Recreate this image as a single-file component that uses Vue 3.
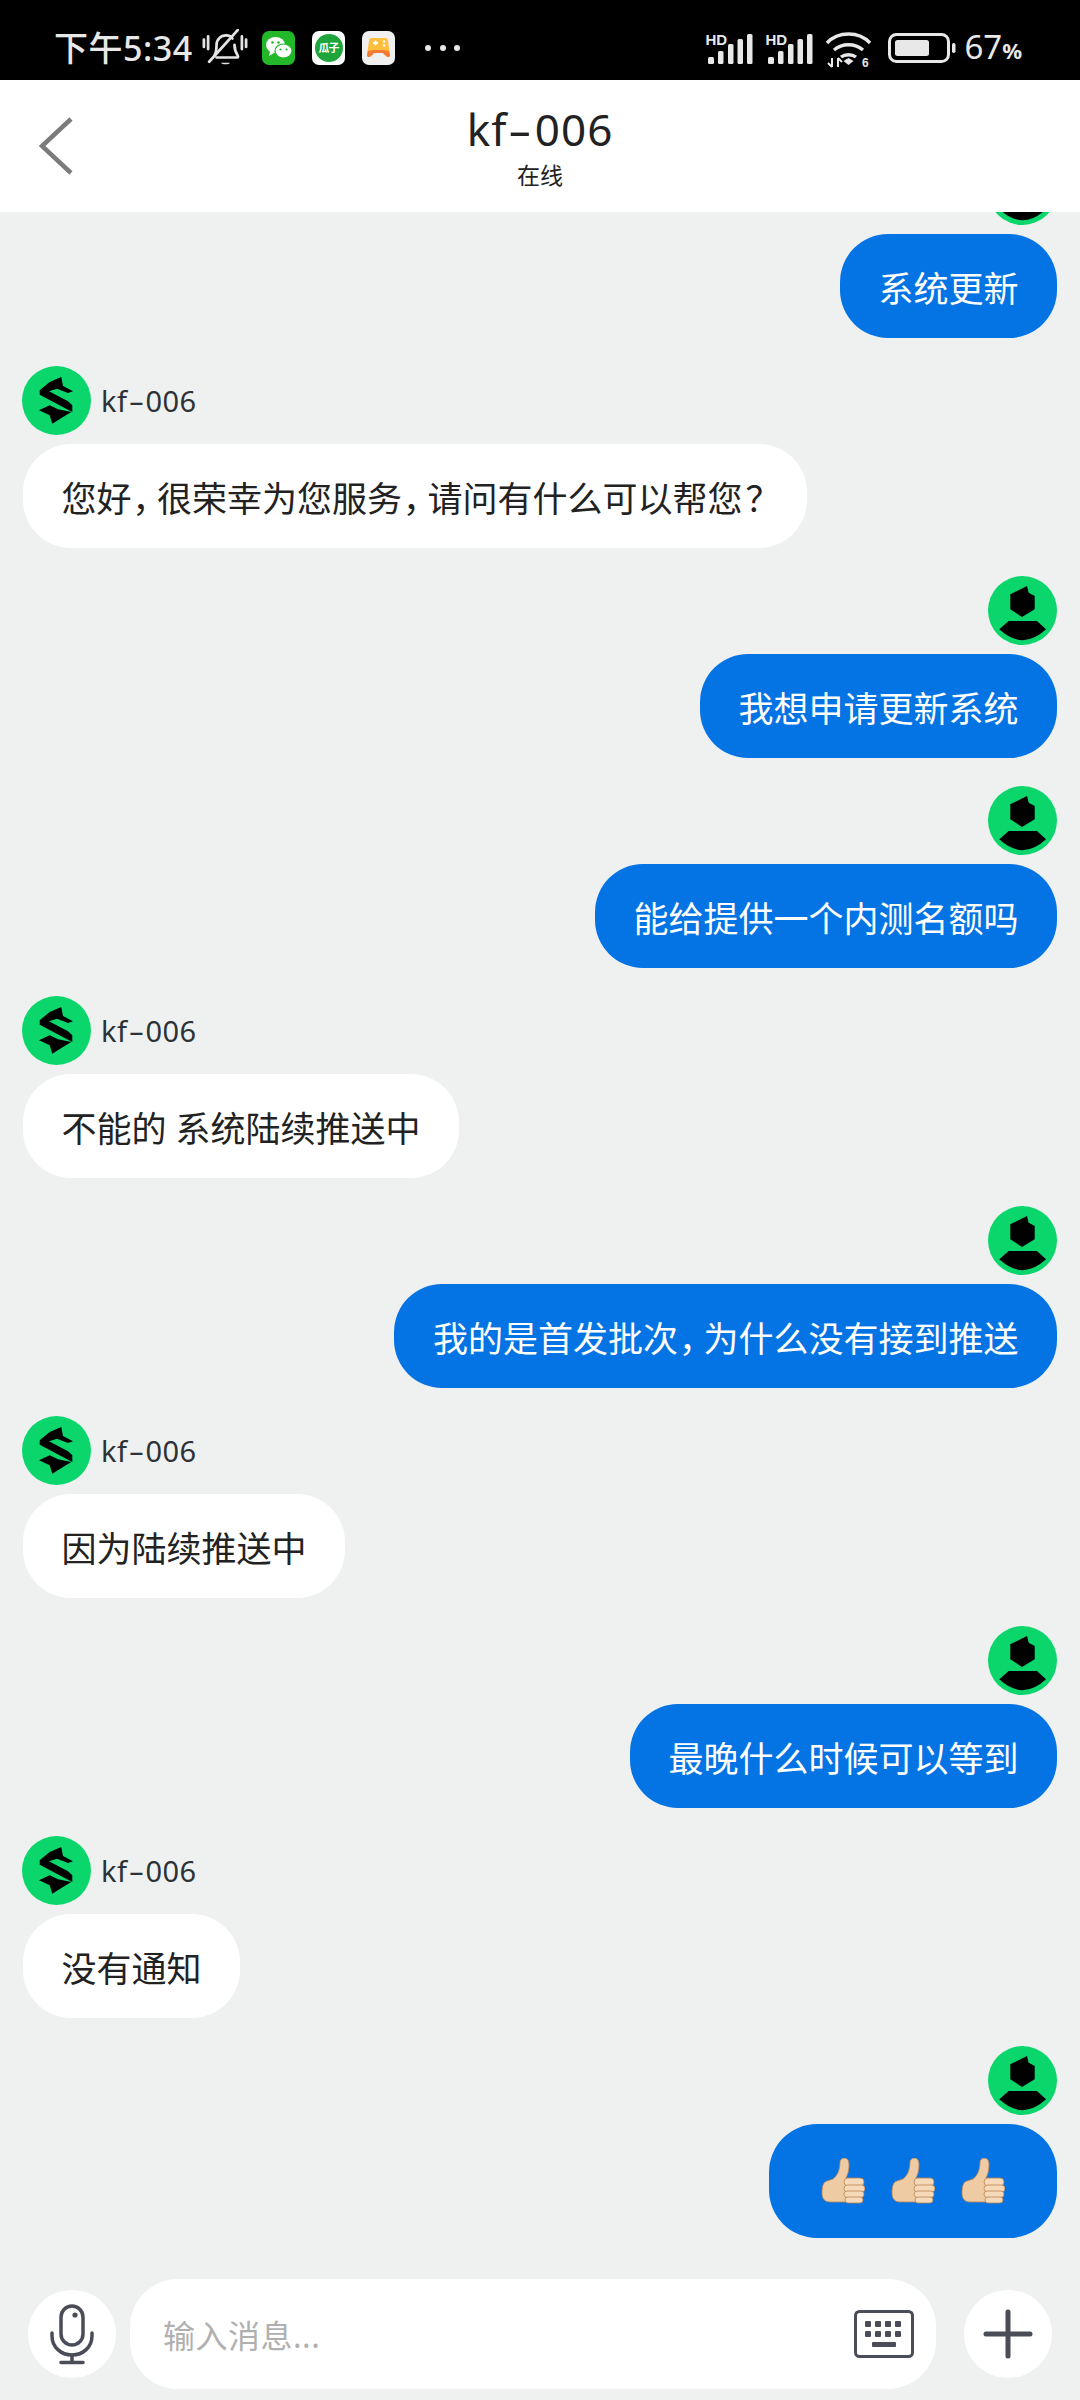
<script setup>
const messages = [
  { id: 1, mine: true, text: '系统更新' },
  { id: 2, mine: false, text: '您好，很荣幸为您服务，请问有什么可以帮您？' },
  { id: 3, mine: true, text: '我想申请更新系统' },
  { id: 4, mine: true, text: '能给提供一个内测名额吗' },
  { id: 5, mine: false, text: '不能的 系统陆续推送中' },
  { id: 6, mine: true, text: '我的是首发批次，为什么没有接到推送' },
  { id: 7, mine: false, text: '因为陆续推送中' },
  { id: 8, mine: true, text: '最晚什么时候可以等到' },
  { id: 9, mine: false, text: '没有通知' },
  { id: 10, mine: true, thumbs: 3 }
]

// punctuation gets its own span so it can sit tighter than a full CJK cell
function parts(text) {
  return text.split(/([，？])/).filter(Boolean)
}
</script>

<template>
  <div class="phone">
    <div class="status-bar">
      <div class="status-left">
        <span class="time">下午5:34</span>
        <svg class="bell" width="46" height="38" viewBox="0 0 42 36" fill="none" stroke="#e4e4e4" stroke-width="2.600" stroke-linecap="round">
          <path d="M1 10v7M5 7v12M37 7v12M41 10v7" />
          <path d="M11 25c2-3 2-6 2-10 0-5 4-9 9-9 3 0 5 1 6 3M30 15c0 4 1 7 3 10 1 2 0 2-2 2H13" />
          <path d="M33 1 6 31" />
          <path d="M17 32c2 2 7 2 9 0z" fill="#e4e4e4" stroke="none" />
        </svg>
        <svg class="app" width="33" height="34" viewBox="0 0 33 34">
          <rect width="33" height="34" rx="7" fill="#22b82a" />
          <ellipse cx="13.500" cy="14" rx="9.500" ry="8" fill="#fff" />
          <path d="M8 20l-1 5 5-3z" fill="#fff" />
          <ellipse cx="21.500" cy="20" rx="8.500" ry="7" fill="#fff" stroke="#22b82a" stroke-width="1.200" />
          <circle cx="10.500" cy="11.500" r="1.300" fill="#22b82a" />
          <circle cx="16.500" cy="11.500" r="1.300" fill="#22b82a" />
          <circle cx="18.500" cy="18.500" r="1.100" fill="#22b82a" />
          <circle cx="24.500" cy="18.500" r="1.100" fill="#22b82a" />
        </svg>
        <span class="app melon"><span class="melon-inner">瓜子</span></span>
        <svg class="app" width="33" height="34" viewBox="0 0 33 34">
          <rect width="33" height="34" rx="7" fill="#f0f0f0" />
          <path d="M7 10c0-2 1-3 3-3h13c2 0 3 1 3 3l2 14c0 2-2 3-4 1l-3-3H12l-3 3c-2 2-4 1-4-1z" fill="#ffbe3d" />
          <path d="M6 20c2 0 4-1 6-1h9c2 0 4 1 6 1l1 4c0 2-2 3-4 1l-3-3H12l-3 3c-2 2-4 1-4-1z" fill="#f47a32" />
          <path d="M11 12h5M13.500 9.500v5" stroke="#fff" stroke-width="1.800" />
          <circle cx="22" cy="10.500" r="1.200" fill="#fff" />
          <circle cx="22" cy="14.500" r="1.200" fill="#fff" />
        </svg>
        <span class="dots"><i></i><i></i><i></i></span>
      </div>
      <div class="status-right">
        <svg v-for="n in 2" :key="n" class="signal" width="49" height="36" viewBox="0 0 48 36" fill="#e8e8e8">
          <text x="0" y="15" font-family="Liberation Sans, sans-serif" font-size="15" font-weight="700">HD</text>
          <rect x="2.500" y="27" width="6" height="7" rx="1.500" />
          <rect x="12.500" y="21" width="5.500" height="13" rx="1.500" />
          <rect x="22.500" y="14" width="5.500" height="20" rx="1.500" />
          <rect x="32" y="9" width="5.500" height="25" rx="1.500" />
          <rect x="41.500" y="4" width="5.500" height="30" rx="1.500" />
        </svg>
        <svg class="wifi" width="47" height="44" viewBox="0 0 47 44" fill="none" stroke="#e8e8e8" stroke-width="3.400">
          <g transform="translate(0,5)">
            <path d="M2 12C13 0 34 0 45 12" />
            <path d="M9 19c8-7 21-7 29 0" />
            <path d="M16 26c4-3 11-3 15 0" />
            <path d="M18.500 30l5-3 5 3-5 4z" fill="#e8e8e8" stroke="none" />
            <path d="M7 27v9M3 32l4 4M13 27v9M13 27l4 4" stroke-width="2" />
          </g>
          <text x="37" y="41" fill="#e8e8e8" stroke="none" font-family="Liberation Sans, sans-serif" font-size="12" font-weight="700">6</text>
        </svg>
        <svg class="battery" width="68" height="30" viewBox="0 0 68 30">
          <rect x="1.500" y="1.500" width="59" height="27" rx="7" fill="none" stroke="#e8e8e8" stroke-width="3" />
          <rect x="7" y="7" width="34" height="16" rx="2.500" fill="#e8e8e8" />
          <rect x="64" y="10" width="3.500" height="10" rx="1.700" fill="#e8e8e8" />
        </svg>
        <span class="level">67<small>%</small></span>
      </div>
    </div>

    <header class="nav">
      <svg class="back" width="34" height="58" viewBox="0 0 34 58" fill="none" stroke="#7a7c7a" stroke-width="4.500">
        <path d="M32 2 3 29l29 27" />
      </svg>
      <div class="nav-title">
        <div class="title">kf<span class="dash">-</span>006</div>
        <div class="subtitle">在线</div>
      </div>
    </header>

    <main class="messages">
      <div v-for="m in messages" :key="m.id" class="msg" :class="{ mine: m.mine }">
        <div class="msg-head">
          <svg v-if="m.mine" class="avatar" viewBox="0 0 69 69">
            <circle cx="34.500" cy="34.500" r="34.500" fill="#0ad66b" />
            <path d="M22.300 18.300 39 10l1.700 6.700 6 3.300v13.300L34 41l-11.700-7.700z" />
            <path d="M11.300 53.300 20.700 45H49l9 8.300Q34.700 75 11.300 53.300z" />
          </svg>
          <template v-else>
            <svg class="avatar" viewBox="0 0 69 69">
              <circle cx="34.500" cy="34.500" r="34.500" fill="#0ad66b" />
              <path d="M39.300 11 41 20l10 5.300-5 1.700-11-4.300-8 2.600 19 10 4.300 4V46L17.700 28.700v-4.400L27.700 16z" />
              <path d="M17 44.300 27.700 39.300l8.300 4 13.300 2.700-8.300 5-10.700 6.700-2.600-8.400z" />
            </svg>
            <span class="name">kf<span class="dash">-</span>006</span>
          </template>
        </div>
        <div class="bubble" :class="{ 'bubble-thumbs': m.thumbs }">
          <template v-if="m.thumbs">
            <svg v-for="n in m.thumbs" :key="n" width="44" height="46" viewBox="0 0 44 46">
              <path d="M1 35c0-6 1-11 5-12l6-2c5-4 7-10 7-17 0-2 2-4 4-4 4 0 5 3 5 7 0 5-1 9-3 13h2v24H9c-5 0-8-3-8-9z" fill="#efcba4" stroke="#b98350" stroke-width=".8" />
              <rect x="23" y="20" width="20" height="8" rx="4" fill="#f5d9b8" stroke="#b98350" stroke-width=".8" />
              <rect x="23" y="27" width="21" height="7" rx="3.500" fill="#f5d9b8" stroke="#b98350" stroke-width=".8" />
              <rect x="23" y="33" width="20" height="6.500" rx="3.200" fill="#f5d9b8" stroke="#b98350" stroke-width=".8" />
              <rect x="24" y="39" width="18" height="6" rx="3" fill="#f5d9b8" stroke="#b98350" stroke-width=".8" />
            </svg>
          </template>
          <span v-else><template v-for="(p, i) in parts(m.text)" :key="i"><span v-if="p === '，' || p === '？'" class="punct">{{ p }}</span><template v-else>{{ p }}</template></template></span>
        </div>
      </div>
    </main>

    <footer class="composer">
      <button class="round">
        <svg width="44" height="61" viewBox="0 0 44 61" fill="none" stroke="#4a4d57" stroke-width="3.500" stroke-linecap="round">
          <rect x="11" y="2" width="22" height="39" rx="11" />
          <circle cx="25" cy="11" r="2.600" fill="#4a4d57" stroke="none" />
          <path d="M2 29v3c0 11 9 19 20 19s20-8 20-19v-3" />
          <path d="M22 51v7M11 58.500h22" />
        </svg>
      </button>
      <div class="input-pill">
        <span class="placeholder">输入消息...</span>
        <svg class="keyboard" width="60" height="48" viewBox="0 0 60 48" fill="#4a4d57">
          <rect x="1.500" y="1.500" width="57" height="45" rx="4" fill="none" stroke="#4a4d57" stroke-width="3" />
          <rect x="11" y="11" width="6" height="6" rx="1" /><rect x="21" y="11" width="6" height="6" rx="1" />
          <rect x="31" y="11" width="6" height="6" rx="1" /><rect x="41" y="11" width="6" height="6" rx="1" />
          <rect x="11" y="21" width="6" height="6" rx="1" /><rect x="21" y="21" width="6" height="6" rx="1" />
          <rect x="31" y="21" width="6" height="6" rx="1" /><rect x="41" y="21" width="6" height="6" rx="1" />
          <rect x="18" y="32" width="24" height="5" rx="1" />
        </svg>
      </div>
      <button class="round">
        <svg width="50" height="50" viewBox="0 0 50 50" stroke="#4a4d57" stroke-width="5" stroke-linecap="round">
          <path d="M25 3v44M3 25h44" />
        </svg>
      </button>
    </footer>
  </div>
</template>

<style>
html, body {
  margin: 0;
  background: #eff1f1;
}
</style>

<style scoped>
.phone {
  width: 1080px;
  height: 2400px;
  display: flex;
  flex-direction: column;
  overflow: hidden;
  background: #eff1f1;
  font-family: "Noto Sans", "Noto Sans CJK SC", sans-serif;
  color: #222;
}

.status-bar {
  height: 80px;
  flex: none;
  box-sizing: border-box;
  padding: 30px 58px 14px 54px;
  background: #000;
  display: flex;
  justify-content: space-between;
  align-items: center;
  color: #e8e8e8;
}

.status-left,
.status-right {
  display: flex;
  align-items: center;
}

.time {
  font-size: 34px;
  line-height: 36px;
  font-weight: 500;
  letter-spacing: 0.5px;
  width: 148px;
  white-space: nowrap;
}

.bell {
  margin-right: 14px;
}

.app {
  margin-right: 17px;
  flex: none;
}

.melon {
  width: 33px;
  height: 34px;
  box-sizing: border-box;
  background: #fff;
  border-radius: 7px;
  display: flex;
  align-items: center;
  justify-content: center;
}

.melon-inner {
  width: 28px;
  height: 28px;
  border-radius: 50%;
  background: #1ea53c;
  color: #fff;
  font-size: 11px;
  font-weight: 700;
  line-height: 28px;
  text-align: center;
  white-space: nowrap;
  letter-spacing: -1px;
}

.dots {
  display: flex;
  gap: 8.500px;
  margin-left: 13px;
}

.dots i {
  width: 6px;
  height: 6px;
  border-radius: 50%;
  background: #e8e8e8;
}

.signal {
  margin-right: 11px;
}

.wifi {
  margin-right: 16px;
}

.battery {
  margin-right: 8px;
}

.level {
  font-size: 33px;
  line-height: 36px;
  white-space: nowrap;
}

.level small {
  font-size: 22px;
  font-weight: 700;
}

.nav {
  height: 132px;
  flex: none;
  box-sizing: border-box;
  background: #fff;
  display: grid;
  grid-template-columns: 1fr auto 1fr;
  align-items: center;
  padding: 0 39px;
}

.nav-title {
  text-align: center;
}

.title {
  font-size: 44px;
  line-height: 52px;
  margin-top: 2px;
  letter-spacing: 1px;
}

.dash {
  display: inline-block;
  transform: scaleX(1.7);
  margin: 0 0.14em;
}

.subtitle {
  font-size: 23px;
  line-height: 34px;
  margin-top: 3px;
}

.messages {
  flex: 1;
  min-height: 0;
  display: flex;
  flex-direction: column;
  justify-content: flex-end;
  gap: 28px;
  padding: 0 23px 41px;
  overflow: hidden;
}

.msg {
  flex: none;
  display: flex;
  flex-direction: column;
  align-items: flex-start;
  gap: 9px;
}

.msg.mine {
  align-items: flex-end;
}

.msg-head {
  display: flex;
  align-items: center;
  gap: 10px;
  margin-left: -1px;
}

.avatar {
  width: 69px;
  height: 69px;
  flex: none;
  display: block;
}

.name {
  font-size: 29px;
  line-height: 40px;
  color: #2c3236;
  letter-spacing: 0.5px;
}

.bubble {
  min-height: 104px;
  box-sizing: border-box;
  padding: 0 38.500px;
  display: flex;
  align-items: center;
  border-radius: 48px;
  background: #fff;
  font-size: 35px;
  white-space: nowrap;
}

.punct {
  font-feature-settings: "palt";
  padding: 0 5px 0 3px;
}

.mine .bubble {
  background: #0474e4;
  color: #fff;
}

.bubble-thumbs {
  height: 114px;
  gap: 26px;
  padding: 0 52px;
}

.composer {
  flex: none;
  height: 110px;
  margin-bottom: 11px;
  padding: 0 28px;
  display: flex;
  align-items: center;
}

.round {
  width: 88px;
  height: 88px;
  flex: none;
  padding: 0;
  border: 0;
  border-radius: 50%;
  background: #fff;
  display: flex;
  align-items: center;
  justify-content: center;
}

.input-pill {
  flex: 1;
  height: 110px;
  margin: 0 28px 0 14px;
  padding: 0 22px 0 33px;
  border-radius: 48px;
  background: #fff;
  display: flex;
  align-items: center;
  justify-content: space-between;
}

.placeholder {
  font-size: 32px;
  letter-spacing: 0.5px;
  color: #b0b0b0;
}
</style>
